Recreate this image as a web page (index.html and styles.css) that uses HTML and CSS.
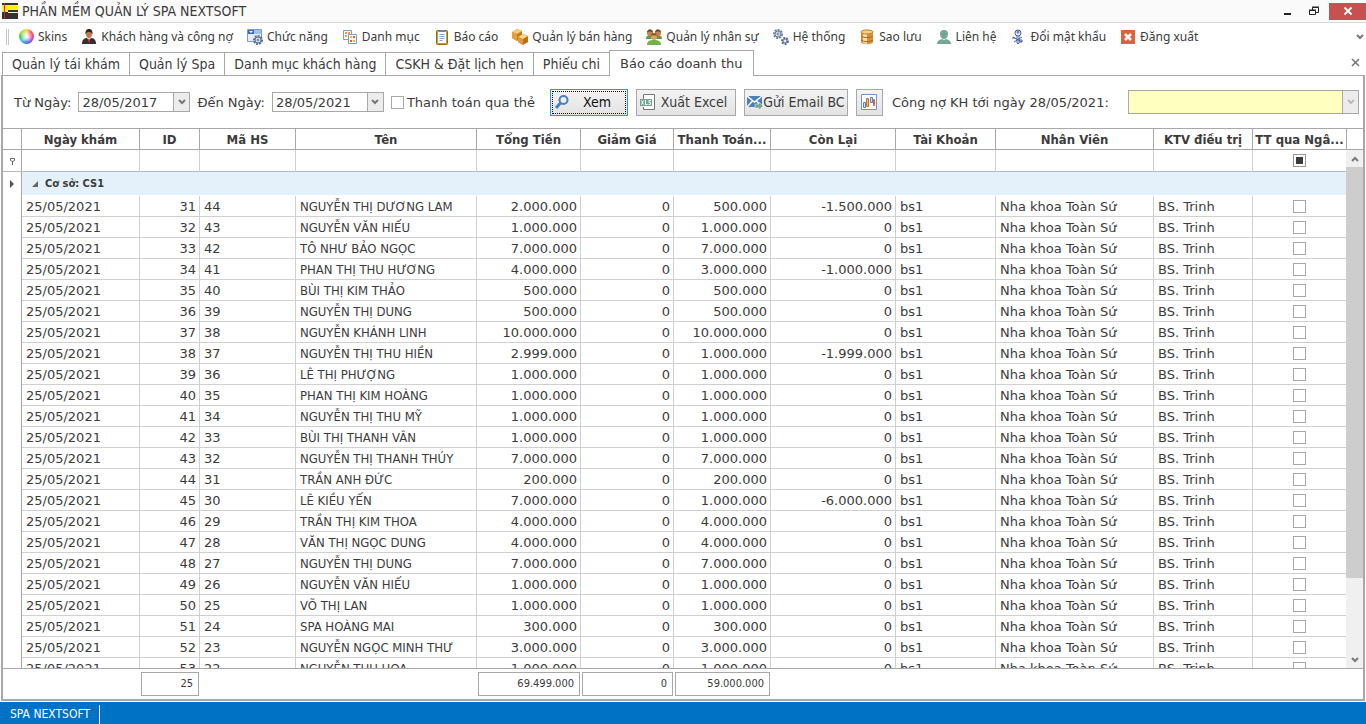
FILE: index.html
```html
<!DOCTYPE html>
<html lang="vi">
  <head>
    <meta charset="UTF-8" />
    <meta name="viewport" content="width=device-width, initial-scale=1.0" />
    <title>PHẦN MỀM QUẢN LÝ SPA NEXTSOFT</title>
    <link rel="stylesheet" href="styles.css">
  </head>
  <body>
    <header class="titlebar">
      <svg class="logo" width="16" height="16" viewBox="0 0 16 16">
        <path d="M0 0h16v16H0z" fill="#333" />
        <path d="M0 2h16v5H6v2H0z" fill="#fdf200" />
        <path d="M6 9h10v1H6z" fill="#f0f0d0" />
        <path d="M2 0h1v16H2z" fill="#e02020" />
      </svg>
      <h1 class="title">PHẦN MỀM QUẢN LÝ SPA NEXTSOFT</h1>
      <button class="win_btn" aria-label="Thu nhỏ">
        <svg width="12" height="12" viewBox="0 0 12 12"><path d="M2 8h7v2H2z" fill="#222" /></svg>
      </button>
      <button class="win_btn" aria-label="Khôi phục">
        <svg width="12" height="12" viewBox="0 0 12 12">
          <path d="M4.500 5V2.500h6v5H8M4 2h7" fill="none" stroke="#222" />
          <path d="M1.500 5.500h6v4h-6zM1 5h7" fill="#fafafa" stroke="#222" />
        </svg>
      </button>
      <button class="win_btn win_close" aria-label="Đóng">
        <svg width="10" height="10" viewBox="0 0 10 10"><path d="M1.500 1.500l7 7M8.500 1.500l-7 7" stroke="#fff" stroke-width="1.800" /></svg>
      </button>
    </header>

    <nav class="menubar">
      <span class="grip"></span>
      <button class="menu_item"><span class="skin_wheel"></span>Skins</button>
      <button class="menu_item">
        <svg width="16" height="16" viewBox="0 0 16 16">
          <path d="M1 15c0-4 2-6 5-6h4c3 0 5 2 5 6z" fill="#33302f" />
          <path d="M6 9l2 3 2-3z" fill="#f2f2f2" />
          <path d="M8 9l-1 2 1 4 1-4z" fill="#d92b20" />
          <ellipse cx="8" cy="5" rx="3" ry="4" fill="#b87a50" />
          <path d="M4.500 6C4 1 6 0 8 0s4 1 3.500 6C11 3 9 3 8 3S5 3 4.500 6z" fill="#3a2418" />
        </svg>Khách hàng và công nợ
      </button>
      <button class="menu_item">
        <svg width="16" height="16" viewBox="0 0 16 16">
          <path d="M.5.500h14v12H.5z" fill="#e3eefb" stroke="#7d9cc8" />
          <path d="M1 1h13v4H1z" fill="#9fc0ea" />
          <path d="M1 1h6v4H1z" fill="#3d6db5" />
          <path d="M2 2h4L4 4z" fill="#fff" />
          <circle cx="11" cy="11" r="4" fill="#dfe6f2" stroke="#5a6c92" stroke-width="2" stroke-dasharray="2 1" />
          <circle cx="11" cy="11" r="3" fill="#e8edf6" stroke="#5a6c92" />
          <circle cx="11" cy="11" r="1" fill="#fff" stroke="#5a6c92" />
        </svg>Chức năng
      </button>
      <button class="menu_item">
        <svg width="16" height="16" viewBox="0 0 16 16">
          <path d="M1.500 1.500h8v9h-8z" fill="#fff" stroke="#7d9cc8" />
          <path d="M3 3h2v2H3zM3 6h2v2H3zM6 3h2v2H6z" fill="#ee9c3c" />
          <path d="M6.500 5.500h8v9h-8z" fill="#fff" stroke="#7d9cc8" />
          <path d="M8 7h2v2H8zM11 11h2v2h-2z" fill="#f5b43c" />
          <path d="M11 7h2v2h-2zM8 11h2v2H8z" fill="#e5583c" />
        </svg>Danh mục
      </button>
      <button class="menu_item">
        <svg width="16" height="16" viewBox="0 0 16 16">
          <rect x="2.500" y="1.500" width="11" height="14" rx="1" fill="#d49a30" stroke="#9a6612" />
          <path d="M4 3h8v11H4z" fill="#fff" />
          <path d="M5.500 5.500h5M5.500 7.500h5M5.500 9.500h5M5.500 11.500h3" stroke="#7ba3d6" />
          <path d="M5 1h6v2H5z" fill="#6787b5" />
        </svg>Báo cáo
      </button>
      <button class="menu_item">
        <svg width="16" height="16" viewBox="0 0 16 16">
          <path d="M0 3l5-3 5 2v6l-5 4-5-3z" fill="#c57a20" />
          <path d="M0 3l5-3 5 2-5 3z" fill="#f7cf74" />
          <path d="M0 3l5 2v7l-5-3z" fill="#e3a03c" />
          <path d="M6 8l5-3 5 2v6l-5 3-5-3z" fill="#b96f1b" />
          <path d="M6 8l5-3 5 2-5 3z" fill="#f9d88c" />
          <path d="M6 8l5 2v6l-5-3z" fill="#e39b35" />
        </svg>Quản lý bán hàng
      </button>
      <button class="menu_item">
        <svg width="16" height="16" viewBox="0 0 16 16">
          <path d="M0 10c0-3 2-4 4-4s3 1 3 4zM9 10c0-3 1-4 3-4s4 1 4 4z" fill="#5f9a3c" />
          <circle cx="4" cy="4" r="3" fill="#c9804a" /><circle cx="12" cy="4" r="3" fill="#c9804a" />
          <path d="M1 4c0-5 6-5 6 0-1-2-5-2-6 0zM9 4c0-5 6-5 6 0-1-2-5-2-6 0z" fill="#7b4420" />
          <path d="M1 16c0-4 3-5 7-5s7 1 7 5z" fill="#71b345" />
          <circle cx="8" cy="8" r="3" fill="#dca070" />
          <path d="M5 7c0-4 6-4 6 0-2-1-4-1-6 0z" fill="#8b5228" />
        </svg>Quản lý nhân sự
      </button>
      <button class="menu_item">
        <svg width="16" height="16" viewBox="0 0 16 16" fill="none">
          <circle cx="5" cy="5" r="4" stroke="#6c7d9f" stroke-width="2" stroke-dasharray="2 1" />
          <circle cx="5" cy="5" r="3" fill="#d5dded" stroke="#6c7d9f" /><circle cx="5" cy="5" r="1" fill="#fff" stroke="#6c7d9f" />
          <circle cx="12" cy="12" r="3" stroke="#5a6c92" stroke-width="2" stroke-dasharray="2 1" />
          <circle cx="12" cy="12" r="2" fill="#e8edf6" stroke="#5a6c92" />
        </svg>Hệ thống
      </button>
      <button class="menu_item">
        <svg width="16" height="16" viewBox="0 0 16 16">
          <path d="M2 3v10c0 3 12 3 12 0V3z" fill="#dc9136" />
          <path d="M4 4h4v11l-4-1z" fill="#fbe0ab" />
          <ellipse cx="8" cy="3" rx="6" ry="2" fill="#f8d28a" stroke="#bd7625" />
          <path d="M2 7c2 2 10 2 12 0M2 11c2 2 10 2 12 0" fill="none" stroke="#a8651c" />
        </svg>Sao lưu
      </button>
      <button class="menu_item">
        <svg width="16" height="16" viewBox="0 0 16 16" fill="#75a594">
          <path d="M8 1c3 0 4 2 4 4 0 3-2 5-4 5S4 8 4 5c0-2 1-4 4-4zM1 15c0-3 2-4 5-5l2 1 2-1c3 1 5 2 5 5z" />
        </svg>Liên hệ
      </button>
      <button class="menu_item">
        <svg width="16" height="16" viewBox="0 0 16 16" fill="none" stroke="#4a5fa5">
          <circle cx="8" cy="4" r="3" fill="#e4e9f6" /><circle cx="8" cy="3" r="1" />
          <path d="M7 7v7l1 1 1-1V7M3 8l9 5M4 13l8-5M9 11h3v2H9M2 9h3" />
        </svg>Đổi mật khẩu
      </button>
      <button class="menu_item">
        <svg width="16" height="16" viewBox="0 0 16 16">
          <path d="M1 1h14v14H1z" fill="#d9623f" /><path d="M5 5l6 6M11 5l-6 6" stroke="#fff" stroke-width="2.500" />
        </svg>Đăng xuất
      </button>
      <button class="menu_more" aria-label="Thêm">
        <svg width="8" height="8" viewBox="0 0 8 8"><path d="M1 2l3 3 3-3" fill="none" stroke="#777" stroke-width="2" /></svg>
      </button>
    </nav>

    <div class="tabs">
      <button class="tab">Quản lý tái khám</button>
      <button class="tab">Quản lý Spa</button>
      <button class="tab">Danh mục khách hàng</button>
      <button class="tab">CSKH &amp; Đặt lịch hẹn</button>
      <button class="tab">Phiếu chi</button>
      <button class="tab _active">Báo cáo doanh thu</button>
      <button class="tab_close" aria-label="Đóng tab">
        <svg width="9" height="9" viewBox="0 0 9 9"><path d="M1 1l7 7M8 1L1 8" stroke="#777" stroke-width="1.600" /></svg>
      </button>
    </div>

    <main class="panel">
      <div class="filters">
        <label for="from">Từ Ngày:</label>
        <div class="combo">
          <input id="from" type="text" value="28/05/2017" />
          <button class="combo_btn" aria-label="Chọn từ ngày"><svg width="8" height="8" viewBox="0 0 8 8"><path d="M1 2l3 3 3-3" fill="none" stroke="#777" stroke-width="2" /></svg></button>
        </div>
        <label for="to">Đến Ngày:</label>
        <div class="combo">
          <input id="to" type="text" value="28/05/2021" />
          <button class="combo_btn" aria-label="Chọn đến ngày"><svg width="8" height="8" viewBox="0 0 8 8"><path d="M1 2l3 3 3-3" fill="none" stroke="#777" stroke-width="2" /></svg></button>
        </div>
        <label class="check_label"><input class="check" type="checkbox" />Thanh toán qua thẻ</label>
        <div class="actions">
          <button class="btn btn_view _focused">
            <svg width="16" height="16" viewBox="0 0 16 16" fill="none" stroke="#4a7fb8">
              <circle cx="9.500" cy="6" r="4" stroke-width="2" /><path d="M6.500 9L2 14" stroke-width="3" />
            </svg><span>Xem</span>
          </button>
          <button class="btn btn_excel">
            <svg width="16" height="16" viewBox="0 0 16 16">
              <path d="M3.500 5V.5h11v15h-11V13" fill="#fff" stroke="#777" />
              <path d="M0 5h12v7H0z" fill="#75a594" />
              <path d="M1.500 6.500l2 4M3.500 6.500l-2 4M5.500 6v4.500h2M11 6.500H9v2h1.500v2H8.500" fill="none" stroke="#fff" />
            </svg><span>Xuất Excel</span>
          </button>
          <button class="btn btn_mail">
            <svg width="16" height="16" viewBox="0 0 16 16">
              <path d="M0 2h15v11H0z" fill="#4a7fb8" />
              <path d="M0 2l7.500 6L15 2M0 13l5.500-6M15 13L9.500 7" fill="none" stroke="#fff" stroke-width="1.500" />
              <path d="M8 10h4V8l4 4-4 4v-2H8z" fill="#75a594" stroke="#eee" stroke-width=".5" />
            </svg><span>Gửi Email BC</span>
          </button>
          <button class="btn btn_chart" aria-label="Biểu đồ">
            <svg width="16" height="16" viewBox="0 0 16 16">
              <path d="M.5.5h15v15H.5z" fill="#fff" stroke="#6f92c7" />
              <path d="M2.500 8.500h2v5h-2zM9.500 3.500h2v5h-2z" fill="#cfe2f7" stroke="#4f83cc" />
              <path d="M5.500 4.500h2v8h-2zM12.500 5.500h1v6h-1z" fill="#f9c28a" stroke="#cf6a2b" />
            </svg>
          </button>
        </div>
        <label for="debt">Công nợ KH tới ngày 28/05/2021:</label>
        <div class="combo combo_debt">
          <input id="debt" type="text" />
          <button class="combo_btn" aria-label="Chọn công nợ" disabled><svg width="8" height="8" viewBox="0 0 8 8"><path d="M1 2l3 3 3-3" fill="none" stroke="#bbb" stroke-width="2" /></svg></button>
        </div>
      </div>

      <div class="grid">
        <div class="grid_view">
          <table class="table">
            <colgroup>
              <col class="c_mark" /><col class="c_date" /><col class="c_id" /><col class="c_code" /><col class="c_name" />
              <col class="c_total" /><col class="c_off" /><col class="c_paid" /><col class="c_left" /><col class="c_user" />
              <col class="c_staff" /><col class="c_ktv" /><col class="c_bank" />
            </colgroup>
            <thead>
              <tr>
                <th></th><th>Ngày khám</th><th>ID</th><th>Mã HS</th><th>Tên</th><th>Tổng Tiền</th><th>Giảm Giá</th>
                <th>Thanh Toán...</th><th>Còn Lại</th><th>Tài Khoản</th><th>Nhân Viên</th><th>KTV điều trị</th><th>TT qua Ngâ...</th>
              </tr>
              <tr class="filter_row">
                <td class="mark"><svg width="7" height="8" viewBox="0 0 7 8"><path d="M1.500 1.500h4v2l-2 1-2-1zM3.500 4v4" fill="none" stroke="#666" /></svg></td>
                <td></td><td></td><td></td><td></td><td></td><td></td><td></td><td></td><td></td><td></td><td></td>
                <td class="center"><input class="check _mixed" type="checkbox" aria-label="Lọc TT qua Ngân hàng" /></td>
              </tr>
            </thead>
            <tbody id="rows">
              <tr class="group_row">
                <td class="mark"><svg width="5" height="8" viewBox="0 0 5 8"><path d="M0 0l4 4-4 4z" fill="#555" /></svg></td>
                <td colspan="12"><svg class="group_arrow" width="6" height="6" viewBox="0 0 6 6"><path d="M6 0v6H0z" fill="#666" /></svg>Cơ sở: CS1</td>
              </tr>
            </tbody>
          </table>
        </div>
        <div class="scroll">
          <div class="scroll_head"></div>
          <button class="scroll_btn" aria-label="Cuộn lên"><svg width="8" height="8" viewBox="0 0 8 8"><path d="M1 6l3-3 3 3" fill="none" stroke="#777" stroke-width="2" /></svg></button>
          <div class="scroll_track"><div class="scroll_thumb"></div></div>
          <button class="scroll_btn" aria-label="Cuộn xuống"><svg width="8" height="8" viewBox="0 0 8 8"><path d="M1 2l3 3 3-3" fill="none" stroke="#777" stroke-width="2" /></svg></button>
        </div>
      </div>

      <div class="summary">
        <table class="table">
          <colgroup>
            <col class="c_mark" /><col class="c_date" /><col class="c_id" /><col class="c_code" /><col class="c_name" />
            <col class="c_total" /><col class="c_off" /><col class="c_paid" /><col class="c_left" /><col class="c_user" />
            <col class="c_staff" /><col class="c_ktv" /><col class="c_bank" />
          </colgroup>
          <tr>
            <td></td><td></td><td><div class="sum">25</div></td><td></td><td></td>
            <td><div class="sum">69.499.000</div></td><td><div class="sum">0</div></td><td><div class="sum">59.000.000</div></td>
            <td></td><td></td><td></td><td></td><td></td>
          </tr>
        </table>
      </div>
    </main>

    <footer class="statusbar"><span class="status">SPA NEXTSOFT</span></footer>

    <script>
      // id, code, name, total, paid, left
      const visits = [
        [31, 44, "NGUYỄN THỊ DƯƠNG LAM", "2.000.000", "500.000", "-1.500.000"],
        [32, 43, "NGUYỄN VĂN HIẾU", "1.000.000", "1.000.000", "0"],
        [33, 42, "TÔ NHƯ BẢO NGỌC", "7.000.000", "7.000.000", "0"],
        [34, 41, "PHAN THỊ THU HƯƠNG", "4.000.000", "3.000.000", "-1.000.000"],
        [35, 40, "BÙI THỊ KIM THẢO", "500.000", "500.000", "0"],
        [36, 39, "NGUYỄN THỊ DUNG", "500.000", "500.000", "0"],
        [37, 38, "NGUYỄN KHÁNH LINH", "10.000.000", "10.000.000", "0"],
        [38, 37, "NGUYỄN THỊ THU HIỀN", "2.999.000", "1.000.000", "-1.999.000"],
        [39, 36, "LÊ THỊ PHƯỢNG", "1.000.000", "1.000.000", "0"],
        [40, 35, "PHAN THỊ KIM HOÀNG", "1.000.000", "1.000.000", "0"],
        [41, 34, "NGUYỄN THỊ THU MỸ", "1.000.000", "1.000.000", "0"],
        [42, 33, "BÙI THỊ THANH VÂN", "1.000.000", "1.000.000", "0"],
        [43, 32, "NGUYỄN THỊ THANH THÚY", "7.000.000", "7.000.000", "0"],
        [44, 31, "TRẦN ANH ĐỨC", "200.000", "200.000", "0"],
        [45, 30, "LÊ KIỀU YẾN", "7.000.000", "1.000.000", "-6.000.000"],
        [46, 29, "TRẦN THỊ KIM THOA", "4.000.000", "4.000.000", "0"],
        [47, 28, "VĂN THỊ NGỌC DUNG", "4.000.000", "4.000.000", "0"],
        [48, 27, "NGUYỄN THỊ DUNG", "7.000.000", "7.000.000", "0"],
        [49, 26, "NGUYỄN VĂN HIẾU", "1.000.000", "1.000.000", "0"],
        [50, 25, "VÕ THỊ LAN", "1.000.000", "1.000.000", "0"],
        [51, 24, "SPA HOÀNG MAI", "300.000", "300.000", "0"],
        [52, 23, "NGUYỄN NGỌC MINH THƯ", "3.000.000", "3.000.000", "0"],
        [53, 22, "NGUYỄN THU HOA", "1.000.000", "1.000.000", "0"],
      ];

      document.querySelector("#rows").insertAdjacentHTML(
        "beforeend",
        visits
          .map(
            ([id, code, name, total, paid, left]) => `<tr>
              <td></td><td>25/05/2021</td><td class="num">${id}</td><td>${code}</td><td class="name">${name}</td>
              <td class="num">${total}</td><td class="num">0</td><td class="num">${paid}</td><td class="num">${left}</td>
              <td>bs1</td><td>Nha khoa Toàn Sứ</td><td>BS. Trinh</td>
              <td class="center"><input class="check" type="checkbox" aria-label="TT qua Ngân hàng ${id}" /></td>
            </tr>`
          )
          .join("")
      );
    </script>
  </body>
</html>
```
FILE: styles.css
```css
* {
  box-sizing: border-box;
}
body {
  margin: 0;
  height: 100vh;
  display: flex;
  flex-direction: column;
  overflow: hidden;
  background-color: #fff;
  color: #3b3b3b;
  font-family: "DejaVu Sans", Verdana, sans-serif;
  font-size: 13px;
}
button,
input {
  font: inherit;
  color: inherit;
}
button {
  display: flex;
  align-items: center;
  padding: 0;
  border: 0;
  background: none;
  white-space: nowrap;
}
svg {
  flex: none;
  display: block;
}

.titlebar {
  display: flex;
  align-items: center;
  height: 23px;
  background-color: #fafafa;
  border-bottom: 1px solid #d5d5d5;
}
.logo {
  margin: 0 4px 0 2px;
}
.title {
  flex: 1;
  margin: 0;
  font-family: "DejaVu Sans Condensed", Tahoma, sans-serif;
  font-size: 14px;
  font-weight: normal;
}
.win_btn {
  justify-content: center;
  width: 26px;
  height: 17px;
}
.win_close {
  width: 37px;
  margin-left: 2px;
  background-color: #c75050;
}

.menubar {
  display: flex;
  align-items: center;
  gap: 14px;
  height: 27px;
  padding: 0 2px 0 6px;
  font-family: "Noto Sans", Tahoma, sans-serif;
  font-size: 12px;
}
.grip {
  width: 3px;
  height: 16px;
  margin-right: -4px;
  border: solid #c8c8c8;
  border-width: 0 1px;
}
.menu_item {
  gap: 4px;
}
.skin_wheel {
  width: 15px;
  height: 15px;
  border-radius: 50%;
  background: radial-gradient(#fff 10%, transparent 60%),
    conic-gradient(#f6d84a, #ff5a4e, #f03fa0, #a04be0, #3f6fe0, #38c8e0, #3fcf50, #a8e04a, #f6d84a);
}
.menu_more {
  margin-left: auto;
}

.tabs {
  display: flex;
  align-items: flex-end;
  height: 25px;
  padding-left: 2px;
}
.tab {
  height: 23px;
  padding: 0 9px;
  border: 1px solid #a8a8a8;
  border-bottom: 0;
  margin-right: -1px;
  font-family: "DejaVu Sans Condensed", Tahoma, sans-serif;
  font-size: 14px;
}
.tab._active {
  position: relative;
  height: 26px;
  padding: 0 10px;
  margin-bottom: -1px;
  background-color: #fff;
  font-family: "DejaVu Sans", Verdana, sans-serif;
  font-size: 13px;
}
.tab_close {
  align-self: center;
  margin: 0 6px 0 auto;
}

.panel {
  flex: 1;
  min-height: 0;
  display: flex;
  flex-direction: column;
  margin: 0 1px 1px;
  border: 2px solid #a8a8a8;
  border-top-width: 1px;
}
.filters {
  display: flex;
  align-items: center;
  gap: 7px;
  height: 52px;
  padding: 0 4px 0 11px;
  white-space: nowrap;
}
.combo {
  display: flex;
  width: 112px;
  height: 20px;
  border: 1px solid #a8a8a8;
}
.combo input {
  flex: 1;
  min-width: 0;
  padding: 0 3px;
  border: 0;
  background: none;
}
.combo_btn {
  justify-content: center;
  width: 16px;
  border-left: 1px solid #a8a8a8;
  background-color: #ececec;
}
.combo_debt {
  flex: 1;
  height: 24px;
  margin-left: 12px;
  background-color: #ffffc0;
}
.check_label {
  display: flex;
  align-items: center;
  gap: 3px;
}
.check {
  appearance: none;
  width: 13px;
  height: 13px;
  margin: 0;
  border: 1px solid #a8a8a8;
  background-color: #fff;
}
.check._mixed {
  border-color: #999;
  background: #3b3b3b content-box;
  padding: 2px;
}
.actions {
  display: flex;
  gap: 8px;
  margin: 0 2px 0 8px;
}
.btn {
  height: 27px;
  padding: 0 3px;
  border: 1px solid #a8a8a8;
  background: linear-gradient(#f3f3f3, #e3e3e3);
  font-family: "DejaVu Sans Condensed", Tahoma, sans-serif;
  font-size: 14px;
}
.btn span {
  flex: 1;
  text-align: center;
}
.btn_view {
  width: 78px;
  color: #111;
}
.btn._focused {
  border-color: #3c8ee6;
  outline: 1px dotted #111;
  outline-offset: -3px;
}
.btn_excel {
  width: 100px;
}
.btn_mail {
  width: 104px;
  padding: 0 2px;
}
.btn_chart {
  justify-content: center;
  width: 27px;
}

.grid {
  flex: 1;
  min-height: 0;
  display: flex;
  border: solid #a8a8a8;
  border-width: 1px 0;
}
.grid_view {
  flex: 1;
  min-width: 0;
  overflow: hidden;
}
.table {
  width: 100%;
  table-layout: fixed;
  border-collapse: separate;
  border-spacing: 0;
}
.c_mark {
  width: 19px;
}
.c_date {
  width: 118px;
}
.c_id {
  width: 60px;
}
.c_code {
  width: 96px;
}
.c_name {
  width: 181px;
}
.c_total {
  width: 104px;
}
.c_off {
  width: 93px;
}
.c_paid {
  width: 97px;
}
.c_left {
  width: 125px;
}
.c_user {
  width: 100px;
}
.c_staff {
  width: 158px;
}
.c_ktv {
  width: 99px;
}
.c_bank {
  width: 93px;
}
.table th,
.table td {
  height: 21px;
  padding: 0 4px;
  overflow: hidden;
  white-space: nowrap;
}
.table th {
  padding: 0;
  border: solid #a8a8a8;
  border-width: 0 1px 1px 0;
  font-family: "DejaVu Sans Condensed", Tahoma, sans-serif;
}
.table td {
  border: solid #d0d0d0;
  border-width: 0 1px 1px 0;
}
.table th:last-child,
.table td:last-child {
  border-right: 0;
}
.table td:first-child {
  padding: 0;
  border-right-color: #a8a8a8;
}
.table tbody td:first-child {
  border-bottom: 0;
}
.filter_row td {
  height: 22px;
  border-bottom-color: #b8b8b8;
}
.table .num {
  padding-right: 3px;
  text-align: right;
}
.table .center {
  padding: 0;
  text-align: center;
}
.center .check {
  display: block;
  margin: 0 auto;
}
.name {
  font-family: "DejaVu Sans Condensed", Tahoma, sans-serif;
}
.mark svg {
  margin: 0 auto;
}
.group_row td {
  height: 24px;
  font-family: "DejaVu Sans Condensed", Tahoma, sans-serif;
  font-size: 11px;
  font-weight: bold;
}
.group_row td:last-child {
  padding-left: 10px;
  border-bottom-color: #fff;
  background-color: #e4f1fb;
}
.group_arrow {
  display: inline-block;
  margin-right: 7px;
}

.scroll {
  width: 17px;
  display: flex;
  flex-direction: column;
  background-color: #f0f0f0;
}
.scroll_head {
  height: 21px;
  border: solid #a8a8a8;
  border-width: 0 0 1px 1px;
  background-color: #fff;
}
.scroll_btn {
  justify-content: center;
  height: 17px;
}
.scroll_track {
  flex: 1;
}
.scroll_thumb {
  height: 85%;
  background-color: #cdcdcd;
}

.summary {
  padding: 3px 17px 3px 0;
}
.summary .table td {
  height: 24px;
  padding: 0 1px;
  border: 0;
}
.sum {
  height: 24px;
  padding-right: 5px;
  border: 1px solid #a8a8a8;
  font-family: "DejaVu Sans Condensed", Tahoma, sans-serif;
  font-size: 11px;
  line-height: 22px;
  text-align: right;
}

.statusbar {
  display: flex;
  height: 22px;
  padding-top: 3px;
  background-color: #0072c6;
  color: #fff;
  font-family: "DejaVu Sans Condensed", Tahoma, sans-serif;
  font-size: 12px;
}
.status {
  padding: 0 9px 0 10px;
  border-right: 1px solid #fff;
  line-height: 19px;
}
```
